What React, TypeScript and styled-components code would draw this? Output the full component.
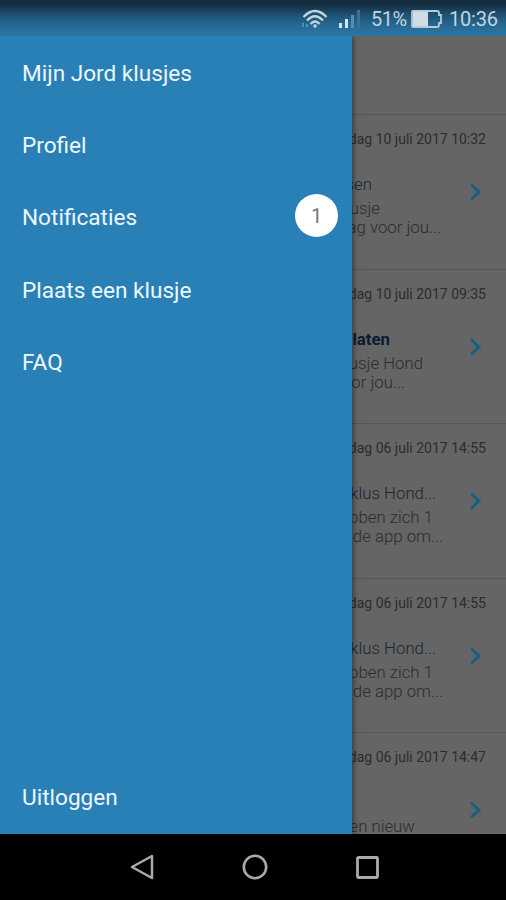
import React from 'react';
import styled, { createGlobalStyle } from 'styled-components';

const GlobalStyle = createGlobalStyle`
  * { box-sizing: border-box; }
  body { margin: 0; background: #000; font-family: Roboto, "Liberation Sans", sans-serif; }
`;

const Phone = styled.div`
  width: 506px;
  height: 900px;
  display: flex;
  flex-direction: column;
  overflow: hidden;
  background: #000;
`;

const StatusBar = styled.header`
  height: 36px;
  flex: none;
  display: flex;
  align-items: center;
  justify-content: flex-end;
  padding: 2px 8px 0 0;
  color: #c3d3df;
  font-size: 20px;
  line-height: 24px;
  background: linear-gradient(#122a3b 0, #142e42 5px, #1d4f70 14px, #246791 24px, #2c77a6 36px);
  svg { flex: none; display: block; }
`;

const WifiSlot = styled.span`
  margin-right: 10px;
`;

const SignalSlot = styled.span`
  margin-right: 11px;
`;

const Percent = styled.span`
  width: 40px;
  letter-spacing: -0.55px;
  white-space: nowrap;
`;

const Clock = styled.time`
  width: 49px;
  margin-left: 6px;
  letter-spacing: -0.2px;
  white-space: nowrap;
`;

const Content = styled.main`
  height: 798px;
  flex: none;
  display: flex;
  overflow: hidden;
`;

const Drawer = styled.nav`
  width: 352px;
  flex: none;
  display: flex;
  flex-direction: column;
  background: #2980b6;
  color: #edf7ff;
  z-index: 1;
  box-shadow: 1px 0 6px rgba(0, 0, 0, 0.5);
`;

const MenuItem = styled.a<{ $last?: boolean }>`
  height: 72.3px;
  flex: none;
  display: flex;
  align-items: center;
  justify-content: space-between;
  padding: ${(p) => (p.$last ? '1px 14px 0 22px' : '3px 14px 0 22px')};
  font-size: 22.6px;
  line-height: 28px;
  white-space: nowrap;
  margin-top: ${(p) => (p.$last ? 'auto' : '0')};
`;

const Badge = styled.span`
  width: 43px;
  height: 43px;
  border-radius: 50%;
  display: flex;
  align-items: center;
  justify-content: center;
  margin-top: -5px;
  background: #fff;
  color: #777;
  font-size: 20px;
`;

const List = styled.section`
  width: 154px;
  flex: none;
  padding-top: 78px;
  background: #656565;
`;

const Entry = styled.article`
  height: 154.6px;
  border-top: 1.5px solid #565656;
  display: grid;
  grid-template: 48px 36px 19px 19px / 110px 1fr;
  overflow: hidden;
`;

const DateLine = styled.time`
  grid-column: 1 / 3;
  display: flex;
  justify-content: flex-end;
  padding-right: 20px;
  overflow: hidden;
  color: #2c2c2c;
  font-size: 14px;
  line-height: 49px;
  white-space: nowrap;
`;

const Line = styled.p<{ $end: number; $tone?: 'strong' | 'title' }>`
  grid-column: 1;
  margin: 0;
  width: ${(p) => p.$end}px;
  display: flex;
  justify-content: flex-end;
  overflow: hidden;
  white-space: nowrap;
  font-size: 16.8px;
  line-height: ${(p) => (p.$tone ? '43px' : '19px')};
  height: ${(p) => (p.$tone ? '36px' : '19px')};
  font-weight: ${(p) => (p.$tone === 'strong' ? 700 : 300)};
  color: ${(p) => (p.$tone === 'strong' ? '#0b1b30' : p.$tone ? '#182530' : '#2c2c2c')};
`;

const Chevron = styled.svg`
  grid-column: 2;
  grid-row: 2 / 5;
  margin: 20px 0 0 7px;
  display: block;
`;

const NavBar = styled.footer`
  flex: 1;
  display: flex;
  align-items: center;
  justify-content: space-between;
  padding: 0 126px 0 129px;
`;

interface EntryData {
  date: string;
  title: string;
  titleEnd: number;
  strong?: boolean;
  lines: [string, number][];
}

const applicants: Omit<EntryData, 'date'> = {
  title: 'klus Hond...',
  titleEnd: 84,
  lines: [['bben zich 1', 81], ['de app om...', 91]],
};

const entries: EntryData[] = [
  { date: 'dag 10 juli 2017 10:32', title: 'sen', titleEnd: 20, lines: [['usje', 28], ['ag voor jou...', 89]] },
  { date: 'dag 10 juli 2017 09:35', title: 'laten', titleEnd: 38, strong: true, lines: [['usje Hond', 71], ['or jou...', 53]] },
  { date: 'dag 06 juli 2017 14:55', ...applicants },
  { date: 'dag 06 juli 2017 14:55', ...applicants },
  { date: 'dag 06 juli 2017 14:47', title: '', titleEnd: 0, lines: [['en nieuw', 63]] },
];

const menu = ['Mijn Jord klusjes', 'Profiel', 'Notificaties', 'Plaats een klusje', 'FAQ'];

export default function App() {
  return (
    <Phone>
      <GlobalStyle />
      <StatusBar>
        <WifiSlot>
          <svg width="28" height="20" viewBox="0 0 28 20" fill="none" stroke="#c3d3df" strokeWidth="2.3">
            <path d="M2.500 8Q14-4 25.500 8M6 11.500Q14 3 22 11.500M9.500 15Q14 10 18.500 15" />
            <circle cx="14" cy="17" r="1.800" fill="#c3d3df" stroke="none" />
            <path d="M2 14v4M6 15v3" stroke="#3ba3d2" strokeWidth="1.600" />
          </svg>
        </WifiSlot>
        <SignalSlot>
          <svg width="21" height="18" viewBox="0 0 21 18">
            <path fill="#d1e4ef" d="M0 13h3v5H0zM6 9h3v9H6z" />
            <path fill="#5a8cad" d="M12 5h3v13h-3z" />
            <path fill="#3d7192" d="M18 0h3v18h-3z" />
          </svg>
        </SignalSlot>
        <Percent>51%</Percent>
        <svg width="32" height="18" viewBox="0 0 32 18">
          <path d="M2 1h24q2 0 2 2v2h2v8h-2v2q0 2-2 2H2q-1 0-1-1V2q0-1 1-1z" fill="none" stroke="#b5cbd9" strokeWidth="1.800" />
          <path fill="#d1dce4" d="M2 2h15v14H2z" />
        </svg>
        <Clock>10:36</Clock>
      </StatusBar>
      <Content>
        <Drawer>
          {menu.map((label) => (
            <MenuItem key={label}>
              {label}
              {label === 'Notificaties' && <Badge>1</Badge>}
            </MenuItem>
          ))}
          <MenuItem $last>Uitloggen</MenuItem>
        </Drawer>
        <List>
          {entries.map((entry, i) => (
            <Entry key={i}>
              <DateLine>{entry.date}</DateLine>
              <Line $end={entry.titleEnd} $tone={entry.strong ? 'strong' : 'title'}>{entry.title}</Line>
              <Chevron width="14" height="18" viewBox="0 0 14 18" fill="none" stroke="#155f81" strokeWidth="3">
                <path d="M2 1.500 10 9 2 16.500" />
              </Chevron>
              {entry.lines.map(([text, end]) => (
                <Line key={text} $end={end}>{text}</Line>
              ))}
            </Entry>
          ))}
        </List>
      </Content>
      <NavBar>
        <svg width="26" height="28" viewBox="0 0 26 28" fill="none" stroke="#aaa" strokeWidth="2.500" strokeLinejoin="round">
          <path d="M23 3v22L3 14z" />
        </svg>
        <svg width="26" height="26" viewBox="0 0 26 26" fill="none" stroke="#aaa" strokeWidth="2.600">
          <circle cx="13" cy="13" r="11.200" />
        </svg>
        <svg width="25" height="25" viewBox="0 0 25 25" fill="none" stroke="#aaa" strokeWidth="2.800">
          <rect x="2.500" y="2.500" width="20" height="20" rx="1" />
        </svg>
      </NavBar>
    </Phone>
  );
}
